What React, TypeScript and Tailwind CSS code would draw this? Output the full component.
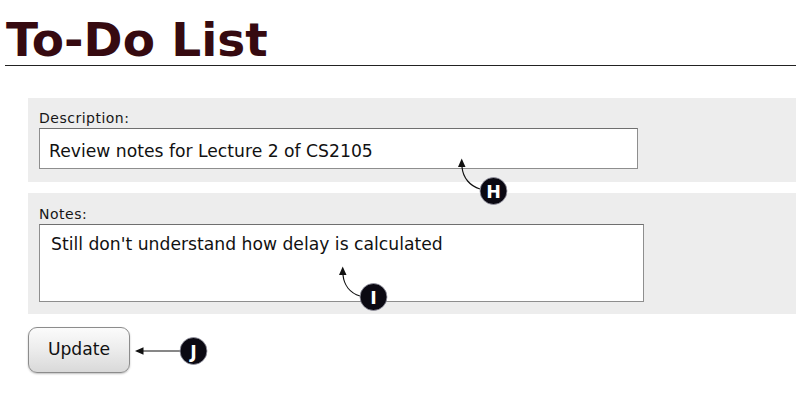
import React from "react";

const font = { fontFamily: '"DejaVu Sans", Verdana, sans-serif' };

function Marker({ cx, cy, letter }: { cx: number; cy: number; letter: string }) {
  return (
    <g>
      <circle cx={cx} cy={cy} r={13.5} fill="#0b0912" stroke="#9a9aa8" strokeWidth={0.8} />
      <text
        x={cx}
        y={cy + 6.5}
        textAnchor="middle"
        fill="#ffffff"
        fontSize={17.5}
        fontWeight={700}
        fontFamily='"DejaVu Sans", Verdana, sans-serif'
      >
        {letter}
      </text>
    </g>
  );
}

export default function App() {
  return (
    <div className="relative w-[796px] h-[417px] bg-white overflow-hidden" style={font}>
      <h1 className="mt-[16px] pl-[6px] text-[47px] leading-[47px] font-bold text-[#360a10] font-['DejaVu_Sans',sans-serif]">
        To-Do List
      </h1>
      <div className="mt-[2px] ml-[5px] border-t border-[#222]" />

      <div className="mt-[32px] ml-[28px] h-[84px] bg-[#ededed] pt-[12px] pl-[11px]">
        <label className="block text-[14px] leading-[16px] tracking-[0.5px] text-[#161616]">Description:</label>
        <input
          readOnly
          value="Review notes for Lecture 2 of CS2105"
          className="mt-[2px] block w-[599px] h-[41px] border border-[#8e8e8e] border-t-[#6f6f6f] bg-white pl-[9px] pt-[5px] pb-0 text-[17.2px] text-[#111] outline-none font-['DejaVu_Sans',sans-serif]"
        />
      </div>

      <div className="mt-[11px] ml-[28px] h-[121px] bg-[#ededed] pt-[13px] pl-[11px]">
        <label className="block text-[14px] leading-[16px] tracking-[0.5px] text-[#161616]">Notes:</label>
        <textarea
          readOnly
          value="Still don't understand how delay is calculated"
          className="mt-[2px] block w-[605px] h-[78px] resize-none border border-[#8e8e8e] border-t-[#6f6f6f] bg-white pl-[11px] pt-[9px] text-[17.2px] leading-[20px] text-[#111] outline-none font-['DejaVu_Sans',sans-serif]"
        />
      </div>

      <button className="mt-[13px] ml-[28px] block w-[102px] h-[46px] rounded-[9px] border border-[#8c8c8c] bg-gradient-to-b from-[#fbfbfb] via-[#ececec] to-[#d9d9d9] shadow-[0_1px_2px_rgba(0,0,0,0.25)] text-[17.2px] text-[#111] font-['DejaVu_Sans',sans-serif]">
        Update
      </button>

      <svg className="absolute left-0 top-0 pointer-events-none" width={796} height={417}>
        <path d="M480 189 C470 186 463 178 462 167" fill="none" stroke="#111" strokeWidth={1.2} />
        <polygon points="461.7,158.5 458,167 465.5,167" fill="#111" />
        <Marker cx={493.5} cy={191} letter="H" />

        <path d="M360 296 C350 293 344 285 343 275" fill="none" stroke="#111" strokeWidth={1.2} />
        <polygon points="342.7,266.5 339,275 346.5,275" fill="#111" />
        <Marker cx={373.5} cy={297} letter="I" />

        <line x1={180} y1={351} x2={142} y2={351} stroke="#111" strokeWidth={1.2} />
        <polygon points="135,351 143.5,347.3 143.5,354.7" fill="#111" />
        <Marker cx={193.5} cy={351} letter="J" />
      </svg>
    </div>
  );
}
